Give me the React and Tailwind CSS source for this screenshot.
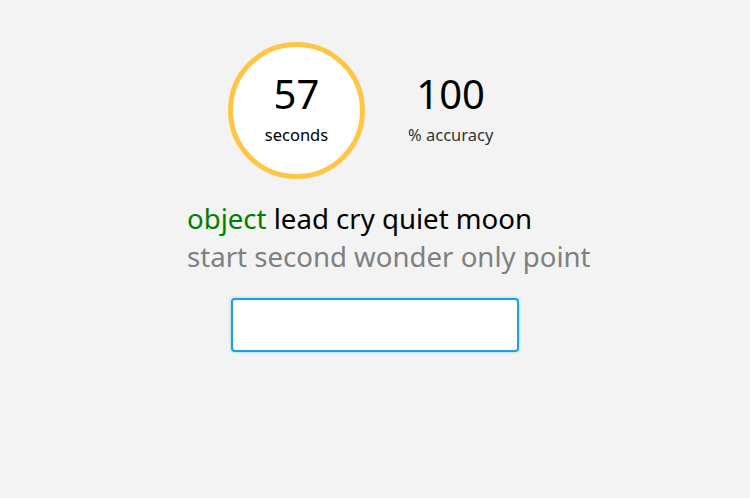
export default function App() {
  return (
    <div className="min-h-[498px] w-full bg-[#f3f3f3] pt-[42px] font-['Noto_Sans',sans-serif]">
      <div className="mx-auto w-[376px]">
        {/* stats */}
        <div className="flex flex-row items-center ml-[41px]">
          <div className="flex h-[137px] w-[137px] flex-col items-center justify-center rounded-full border-[5px] border-[#ffc544] bg-white pb-[4px]">
            <div className="text-[40px] leading-[44px] text-black">57</div>
            <div className="mt-[8px] text-[16.5px] leading-[22px] text-black">seconds</div>
          </div>
          <div className="ml-[43px] flex flex-col items-center pb-[4px]">
            <div className="text-[40px] leading-[44px] text-black">100</div>
            <div className="mt-[8px] text-[16.5px] leading-[22px] text-[#333]">% accuracy</div>
          </div>
        </div>

        {/* words */}
        <div className="mt-[20px] whitespace-nowrap text-[27.6px] leading-[38px]">
          <div>
            <span className="text-[#008000]">object</span>{" "}
            <span className="text-black">lead cry quiet moon</span>
          </div>
          <div className="text-[#808080]">start second wonder only point</div>
        </div>

        {/* input */}
        <div className="mt-[23px] flex justify-center">
          <input
            type="text"
            className="h-[54px] w-[288px] rounded-[4px] border-2 border-[#1ba1e2] bg-white px-2 text-[22px] shadow-[0_0_3px_#7fcff0] outline-none"
          />
        </div>
      </div>
    </div>
  );
}
